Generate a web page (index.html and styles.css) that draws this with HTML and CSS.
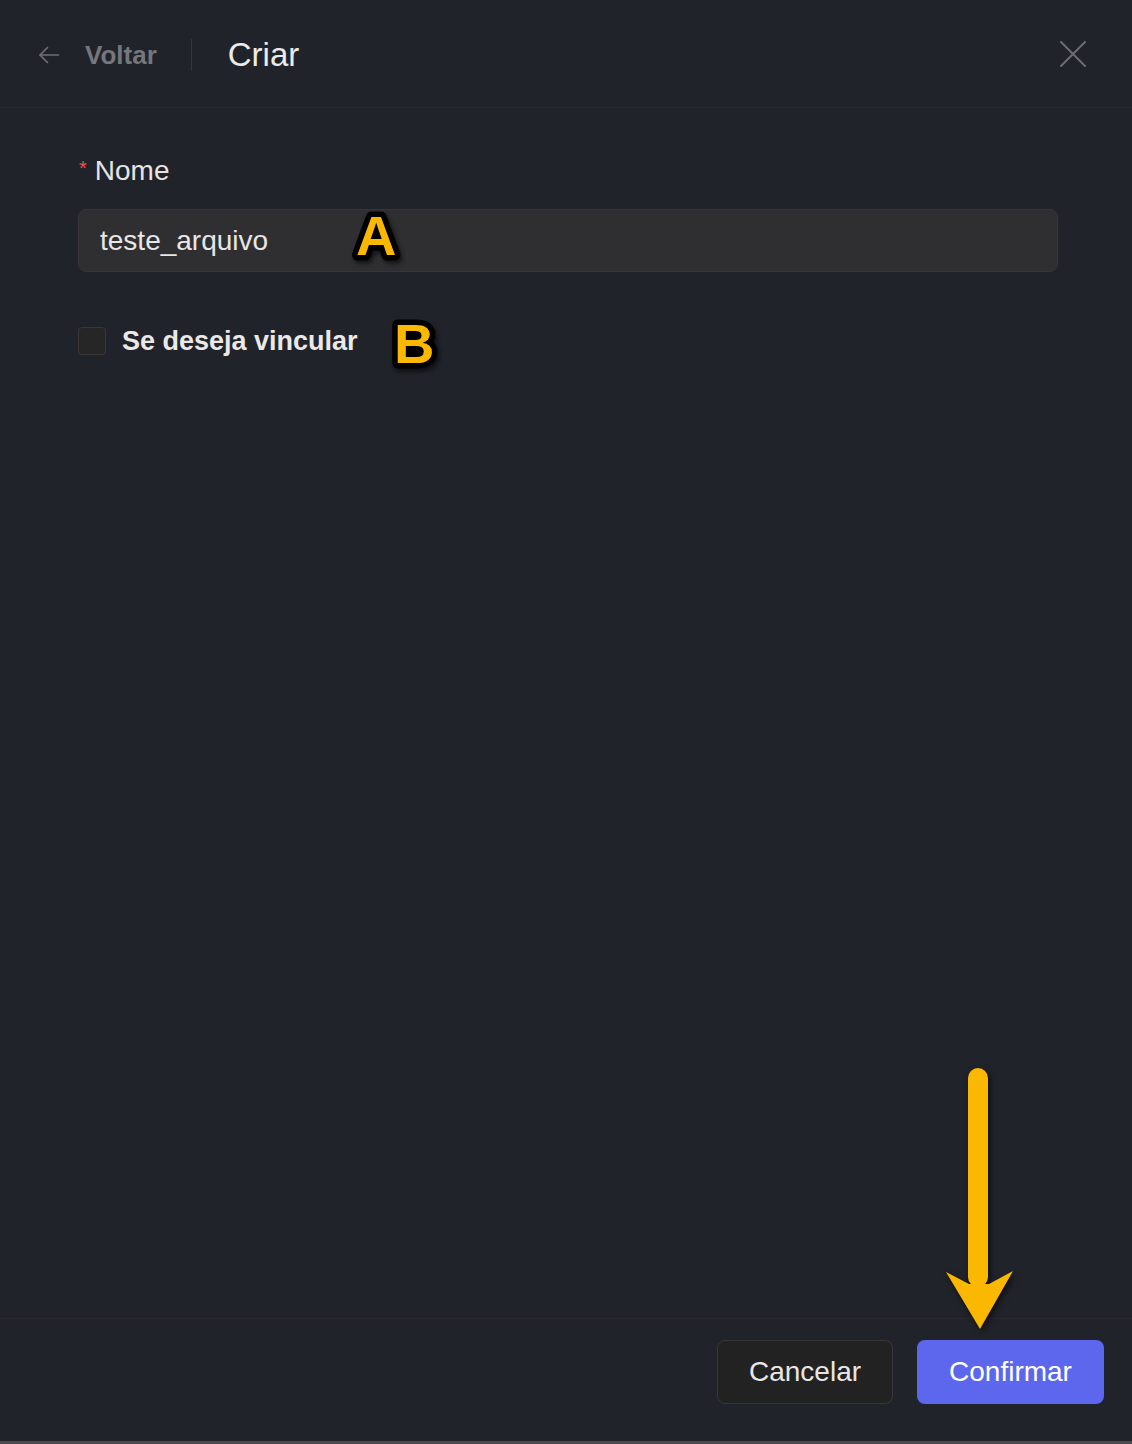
FILE: index.html
```html
<!DOCTYPE html>
<html lang="pt">
<head>
<meta charset="utf-8">
<title>Criar</title>
<link rel="stylesheet" href="styles.css">
</head>
<body>
<div class="modal">
  <header class="header">
    <div class="header-left">
      <button class="back">
        <svg width="24" height="24" viewBox="0 0 24 24" fill="none" stroke="currentColor" stroke-width="1.6" stroke-linecap="round" stroke-linejoin="round"><path d="M21.5 12H3"/><path d="M10.5 4.5L3 12l7.5 7.5"/></svg>
        <span>Voltar</span>
      </button>
      <span class="sep"></span>
      <h1 class="title">Criar</h1>
    </div>
    <button class="close">
      <svg width="26" height="26" viewBox="0 0 26 26" fill="none" stroke="currentColor" stroke-width="2" stroke-linecap="round"><path d="M1 1l24 24M25 1L1 25"/></svg>
    </button>
  </header>

  <main class="content">
    <div class="field">
      <label class="label"><span class="req">*</span>Nome</label>
      <div class="input-wrap">
        <div class="input">teste_arquivo</div>
        <svg class="badge badge-a" width="70" height="70" viewBox="0 0 70 70"><text x="8" y="52" class="badge-text">A</text></svg>
      </div>
    </div>
    <div class="check-row">
      <span class="checkbox"></span>
      <span class="check-label">Se deseja vincular</span>
      <svg class="badge badge-b" width="70" height="70" viewBox="0 0 70 70"><text x="8" y="52" class="badge-text">B</text></svg>
    </div>
  </main>

  <footer class="footer">
    <button class="btn btn-cancel">Cancelar</button>
    <button class="btn btn-primary">Confirmar</button>
    <svg class="arrow" width="90" height="280" viewBox="0 0 90 280">
      <line x1="45" y1="26" x2="45" y2="225" stroke="#fbb800" stroke-width="20" stroke-linecap="round"/>
      <polygon points="13,220 36,232 56,232 80,219 47,277" fill="#fbb800"/>
    </svg>
  </footer>
  <div class="bottom-strip"></div>
</div>
</body>
</html>
```

FILE: styles.css
```css
* { box-sizing: border-box; }
html, body { margin: 0; padding: 0; }
body {
  background: #21232b;
  font-family: "Liberation Sans", Arial, sans-serif;
  color: #e8e6e6;
}
.modal {
  height: 1444px;
  display: flex;
  flex-direction: column;
  position: relative;
}
.header {
  height: 108px;
  flex: none;
  display: flex;
  align-items: center;
  justify-content: space-between;
  padding: 3px 46px 0 37px;
  border-bottom: 1px solid #29292b;
}
.header-left { display: flex; align-items: center; }
.back {
  display: flex;
  align-items: center;
  gap: 24px;
  background: none;
  border: 0;
  padding: 0;
  color: #76777c;
  font-family: inherit;
  font-size: 26px;
  font-weight: 700;
  cursor: pointer;
}
.back svg { color: #6f7075; }
.sep {
  width: 1px;
  height: 32px;
  background: #3a3436;
  margin: 0 36px 0 34px;
}
.title {
  margin: 0;
  font-size: 33px;
  font-weight: 400;
  color: #ebebeb;
  line-height: 40px;
}
.close {
  background: none;
  border: 0;
  padding: 0;
  color: #6c6d72;
  display: flex;
  margin-top: -3px;
}
.content {
  flex: 1;
  padding: 43px 74px 0 78px;
}
.label {
  display: flex;
  align-items: center;
  font-size: 28px;
  line-height: 40px;
  color: #e6e4e4;
}
.req {
  color: #e5534b;
  font-size: 20px;
  margin: -6px 8px 0 1px;
}
.input-wrap {
  position: relative;
  margin-top: 18px;
}
.input {
  height: 63px;
  background: #2f2f31;
  border: 1px solid #38343a;
  border-radius: 8px;
  padding: 0 21px;
  display: flex;
  align-items: center;
  font-size: 28px;
  color: #e8e6e6;
}
.check-row {
  position: relative;
  margin-top: 49px;
  display: flex;
  align-items: center;
  height: 40px;
}
.checkbox {
  width: 28px;
  height: 28px;
  border: 1px solid #3b3739;
  background: #262626;
  border-radius: 4px;
  margin-right: 16px;
}
.check-label {
  font-size: 27px;
  font-weight: 700;
  color: #ebe8e8;
}
.badge {
  position: absolute;
  overflow: visible;
  filter: drop-shadow(2px 3px 2px rgba(0,0,0,0.6));
}
.badge-text {
  font-family: "Liberation Sans", Arial, sans-serif;
  font-weight: 700;
  font-size: 56px;
  fill: #fbb800;
  stroke: #000;
  stroke-width: 11px;
  stroke-linejoin: round;
  paint-order: stroke fill;
}
.badge-a { left: 270px; top: -6px; }
.badge-b { left: 308px; top: -10px; }
.footer {
  flex: none;
  position: relative;
  border-top: 1px solid #29292b;
  padding: 21px 28px 37px 0;
  display: flex;
  justify-content: flex-end;
  gap: 24px;
}
.btn {
  height: 64px;
  border-radius: 8px;
  font-family: inherit;
  font-size: 28px;
  padding: 0;
  cursor: pointer;
}
.btn-cancel {
  width: 176px;
  background: #222222;
  border: 1px solid #3a3638;
  color: #e8e6e6;
}
.btn-primary {
  width: 187px;
  background: #5c67ed;
  border: 0;
  color: #ffffff;
}
.arrow {
  position: absolute;
  left: 933px;
  top: -267px;
  filter: drop-shadow(2px 3px 3px rgba(0,0,0,0.6));
}
.bottom-strip {
  height: 3px;
  flex: none;
  background: #4a4a4f;
}
```
